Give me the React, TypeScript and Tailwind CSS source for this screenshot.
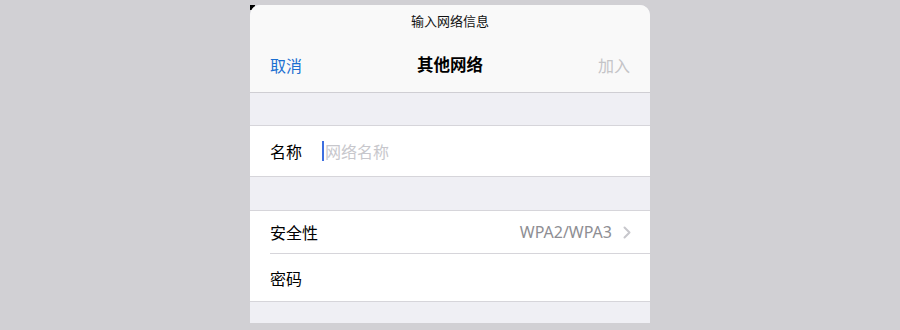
import React from "react";

export default function App() {
  const font = { fontFamily: '"Noto Sans CJK SC", "Noto Sans", sans-serif' };
  return (
    <div className="w-[900px] h-[330px] bg-[#d1d0d4] pt-[5px] flex justify-center" style={font}>
      <div className="relative w-[400px] h-[318px]">
        <div className="absolute left-0 top-0 w-[5px] h-[5px] bg-black" />
        <div className="relative w-full h-full rounded-t-[10px] overflow-hidden bg-[#efeff4] flex flex-col">
          <div className="bg-[#f9f9f9] border-b border-[#cfced3]">
            <div className="h-[32px] pt-[7px] text-center text-[13px] leading-[18px] text-[#111]">输入网络信息</div>
            <div className="h-[55px] flex items-center justify-between px-[20px] text-[16px]">
              <span className="text-[#1b6fd1]">取消</span>
              <span className="font-bold text-[16.5px] text-black">其他网络</span>
              <span className="text-[#c4c4c7]">加入</span>
            </div>
          </div>
          <div className="h-[32px]" />
          <div className="bg-white border-y border-[#d6d5da] h-[52px] flex items-center pl-[20px] text-[16px]">
            <span className="text-black w-[52px]">名称</span>
            <span className="w-[2px] h-[20px] bg-[#3d6fe0] mr-[1px]" />
            <span className="text-[#c7c7cc]">网络名称</span>
          </div>
          <div className="h-[33px]" />
          <div className="bg-white border-y border-[#d6d5da] text-[16px]">
            <div className="h-[42px] flex items-center pl-[20px] pr-[19px]">
              <span className="text-black flex-1">安全性</span>
              <span className="text-[#8e8e93] mr-[11px]" style={{ fontFamily: '"Noto Sans", sans-serif' }}>WPA2/WPA3</span>
              <svg width="8" height="13" viewBox="0 0 8 13" className="mt-[1px]">
                <path d="M1.5 1.5 L6.5 6.5 L1.5 11.5" fill="none" stroke="#c7c7cc" strokeWidth="2" strokeLinecap="round" strokeLinejoin="round" />
              </svg>
            </div>
            <div className="ml-[20px] h-px bg-[#d6d5da]" />
            <div className="h-[47px] flex items-center pl-[20px]">
              <span className="text-black">密码</span>
            </div>
          </div>
          <div className="flex-1" />
        </div>
      </div>
    </div>
  );
}
